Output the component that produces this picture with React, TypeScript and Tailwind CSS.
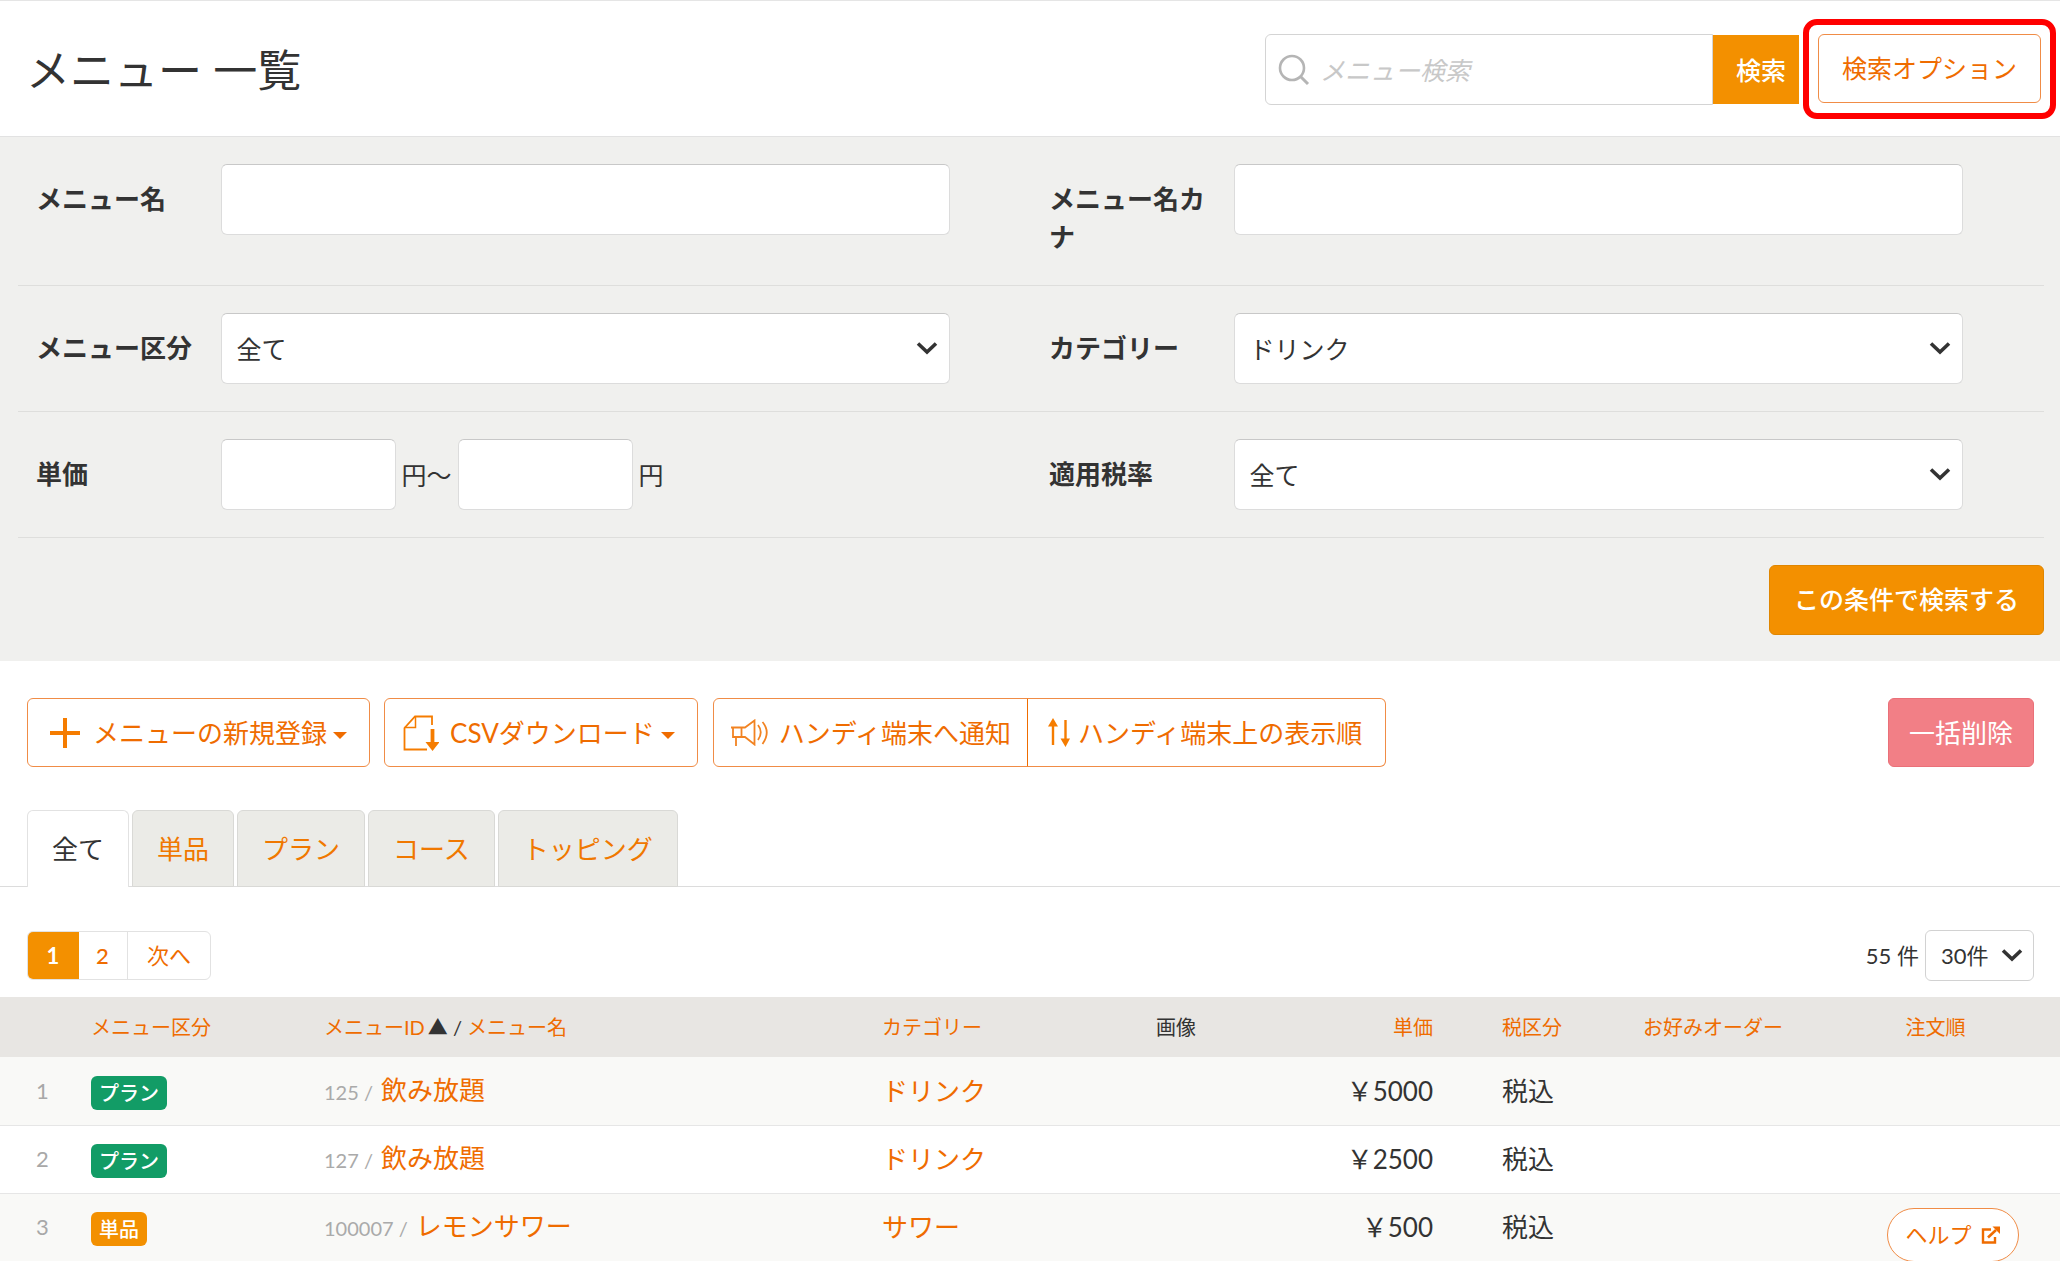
import React, { useState } from "react";

const FIELD =
  "h-[71px] rounded-md border border-[#dcdcdc] border-t-[#c8c8c8] bg-white px-[15px] text-[25px] text-[#333]";

const OUTLINE =
  "flex h-[69px] items-center border border-[#f08c46] bg-white whitespace-nowrap text-[#ef6c00]";

function Chevron({ className = "" }: { className?: string }) {
  return (
    <svg viewBox="0 0 22 14" className={`pointer-events-none h-[14px] w-[22px] ${className}`} aria-hidden="true">
      <path d="M2 2.5 L11 11 L20 2.5" fill="none" stroke="#333" strokeWidth="3.6" />
    </svg>
  );
}

function Caret() {
  return (
    <svg viewBox="0 0 14 7" className="mt-[6px] ml-[6px] h-[7px] w-[14px]" aria-hidden="true">
      <path d="M0 0H14L7 7Z" fill="#ef6c00" />
    </svg>
  );
}

function PlusIcon() {
  return (
    <svg viewBox="0 0 30 30" className="mr-[13px] h-[30px] w-[30px]" aria-hidden="true">
      <path d="M15 0V30M0 15H30" stroke="#f57c00" strokeWidth="4" />
    </svg>
  );
}

function FileDownIcon() {
  return (
    <svg viewBox="0 0 36 36" className="mr-[11px] h-[36px] w-[36px]" aria-hidden="true" fill="none" stroke="#f57c00" strokeWidth="1.8">
      <path d="M29 10V1.500H12L1.500 13V34.500H24" />
      <path d="M12.500 2V12.500H1.500" strokeWidth="1.500" />
      <path d="M29.500 14V28" strokeWidth="3.800" />
      <path d="M22.500 27H36.500L29.500 36Z" fill="#f57c00" stroke="none" />
    </svg>
  );
}

function SpeakerIcon() {
  return (
    <svg viewBox="0 0 37 27" className="mr-[11px] h-[27px] w-[37px]" aria-hidden="true" fill="none" stroke="#f28322" strokeWidth="1.800">
      <path d="M0 8.500H14L23.500 1.500V25.500L14 18H2V8.500" />
      <path d="M5 27V18M10.500 8.500V18" />
      <path d="M27 6Q32.500 13 27 21M31.500 3Q40 13 31.500 25" />
    </svg>
  );
}

function SortIcon() {
  return (
    <svg viewBox="0 0 22 29" className="mr-[8px] h-[29px] w-[22px]" aria-hidden="true">
      <path d="M5 7V27M17.500 2V22" stroke="#f57c00" strokeWidth="2.400" />
      <path d="M0 8.500L5 0L10 8.500ZM12.500 20.500H22L17.500 29Z" fill="#f57c00" />
    </svg>
  );
}

function ExternalIcon() {
  return (
    <svg viewBox="0 0 20 18" className="ml-[9px] h-[18px] w-[20px]" aria-hidden="true">
      <path d="M10 3.500H2V16.500H14V11" fill="none" stroke="#ef6c00" strokeWidth="2.400" />
      <path d="M7 11.500L15 4" fill="none" stroke="#ef6c00" strokeWidth="2.600" />
      <path d="M11.500 0.500H19V8Z" fill="#ef6c00" />
    </svg>
  );
}

function SelectField({ id, options }: { id: string; options: string[] }) {
  return (
    <div className="relative">
      <select id={id} className={`${FIELD} w-full appearance-none`}>
        {options.map((o) => (
          <option key={o}>{o}</option>
        ))}
      </select>
      <Chevron className="absolute top-[28px] right-[12px]" />
    </div>
  );
}

function Field({ id, label, children }: { id: string; label: string; children: React.ReactNode }) {
  return (
    <div className="flex w-1/2">
      <label htmlFor={id} className="w-1/5 pt-[16px] pr-[18px] pl-[18px] leading-[38px] font-bold">
        {label}
      </label>
      <div className="w-[72%]">{children}</div>
    </div>
  );
}

const ROWS = [
  { type: "プラン", id: "125", name: "飲み放題", category: "ドリンク", price: "￥5000" },
  { type: "プラン", id: "127", name: "飲み放題", category: "ドリンク", price: "￥2500" },
  { type: "単品", id: "100007", name: "レモンサワー", category: "サワー", price: "￥500" },
];

const TABS = ["全て", "単品", "プラン", "コース", "トッピング"];

export default function App() {
  const [tab, setTab] = useState("全て");
  return (
    <div className="relative min-h-screen overflow-hidden border-t border-[#e5e5e5] bg-white font-[Lato,'Noto_Sans_CJK_JP',sans-serif] text-[26px] leading-[38px] text-[#333]">
      <header className="flex items-start justify-between border-b border-[#e2e2e2] pt-[18px] pr-[4px] pb-[17px] pl-[26px]">
        <h1 className="pt-[20px] text-[44px] leading-[62px]">メニュー 一覧</h1>
        <div className="flex">
          <form className="flex pt-[15px]" onSubmit={(e) => e.preventDefault()}>
            <div className="relative">
              <svg viewBox="0 0 32 32" className="absolute top-[20px] left-[13px] h-[32px] w-[32px]" fill="none" stroke="#b5b5b5" strokeWidth="2.600" aria-hidden="true">
                <circle cx="14" cy="14" r="12" />
                <path d="M22.500 22.500L30 30" strokeWidth="3" />
              </svg>
              <input
                aria-label="メニュー検索"
                placeholder="メニュー検索"
                className="h-[71px] w-[448px] rounded-l-md border border-[#d4d4d4] bg-white pr-[12px] pl-[54px] text-[25px] placeholder:text-[#c8c8c8] placeholder:italic"
              />
            </div>
            <button className="mt-px h-[69px] w-[86px] bg-[#f39000] pl-[10px] text-[25px] font-medium text-white">検索</button>
          </form>
          <div className="ml-[4px] rounded-[14px] border-[6px] border-[#ff0000] px-[9px] pt-[9px] pb-[10px]">
            <button className={`${OUTLINE} rounded-md px-[23px] pb-[2px] text-[25px]`}>検索オプション</button>
          </div>
        </div>
      </header>

      <section className="bg-[#f0f0ee] pr-[16px] pb-[26px] pl-[18px]">
        <div className="flex border-b border-[#dededc] pt-[27px] pb-[29px]">
          <Field id="name" label="メニュー名">
            <input id="name" className={`${FIELD} w-full`} />
          </Field>
          <Field id="kana" label="メニュー名カナ">
            <input id="kana" className={`${FIELD} w-full`} />
          </Field>
        </div>
        <div className="flex border-b border-[#dededc] py-[27px]">
          <Field id="kind" label="メニュー区分">
            <SelectField id="kind" options={["全て", "単品", "プラン", "コース", "トッピング"]} />
          </Field>
          <Field id="category" label="カテゴリー">
            <SelectField id="category" options={["ドリンク", "サワー"]} />
          </Field>
        </div>
        <div className="flex border-b border-[#dededc] py-[27px]">
          <Field id="min" label="単価">
            <div className="flex items-center text-[25px]">
              <input id="min" className={`${FIELD} w-[175px]`} />
              <span className="mx-[6px]">円〜</span>
              <input aria-label="単価の上限" className={`${FIELD} w-[175px]`} />
              <span className="ml-[6px]">円</span>
            </div>
          </Field>
          <Field id="tax" label="適用税率">
            <SelectField id="tax" options={["全て", "8%", "10%"]} />
          </Field>
        </div>
        <div className="flex justify-end pt-[27px]">
          <button className="h-[70px] rounded-md border border-[#e08600] bg-[#f39000] px-[24px] pb-[2px] text-[25px] font-medium text-white">
            この条件で検索する
          </button>
        </div>
      </section>

      <div className="flex items-center pt-[37px] pr-[26px] pl-[27px]">
        <button className={`${OUTLINE} rounded-md px-[22px]`}>
          <PlusIcon />
          メニューの新規登録
          <Caret />
        </button>
        <button className={`${OUTLINE} ml-[14px] rounded-md pr-[22px] pl-[18px]`}>
          <FileDownIcon />
          CSVダウンロード
          <Caret />
        </button>
        <div className="ml-[15px] flex">
          <button className={`${OUTLINE} rounded-l-md pr-[16px] pl-[17px]`}>
            <SpeakerIcon />
            ハンディ端末へ通知
          </button>
          <button className={`${OUTLINE} -ml-px rounded-r-md border-l-[#ef6c00] pr-[23px] pl-[20px]`}>
            <SortIcon />
            ハンディ端末上の表示順
          </button>
        </div>
        <button className="ml-auto h-[69px] rounded-md border border-[#ea7078] bg-[#f27f86] px-[20px] text-white">
          一括削除
        </button>
      </div>

      <div role="tablist" className="mt-[43px] flex gap-[3px] border-b border-[#dcdcdc] pl-[27px]">
        {TABS.map((t) => (
          <button
            key={t}
            role="tab"
            aria-selected={t === tab}
            onClick={() => setTab(t)}
            className={
              t === tab
                ? "-mb-px h-[77px] rounded-t-md border border-b-0 border-[#e2e2e2] bg-white px-[24px]"
                : "-mb-px h-[77px] rounded-t-md border border-[#d9d9d6] bg-[#ebebe7] px-[24px] text-[#f07800]"
            }
          >
            {t}
          </button>
        ))}
      </div>

      <div className="flex items-center justify-between pt-[43px] pr-[26px] pb-[16px] pl-[27px] text-[22px]">
        <nav className="flex h-[49px] overflow-hidden rounded-md border border-[#e2e2e2] text-[#ef6c00]" aria-label="ページ">
          <a href="#1" className="-m-px flex w-[52px] items-center justify-center bg-[#f39000] font-bold text-white">1</a>
          <a href="#2" className="flex w-[50px] items-center justify-center border-r border-[#e2e2e2] font-medium">2</a>
          <a href="#next" className="flex w-[82px] items-center justify-center">次へ</a>
        </nav>
        <div className="flex items-center">
          <label htmlFor="per">55 件</label>
          <div className="relative ml-[6px]">
            <select id="per" className="h-[51px] w-[109px] appearance-none rounded-md border border-[#d2d2d2] bg-white pl-[15px]">
              <option>30件</option>
              <option>50件</option>
            </select>
            <Chevron className="absolute top-[18px] right-[11px]" />
          </div>
        </div>
      </div>

      <table className="w-full table-fixed border-collapse text-left">
        <colgroup>
          <col className="w-[91px]" />
          <col className="w-[233px]" />
          <col className="w-[558px]" />
          <col className="w-[210px]" />
          <col className="w-[168px]" />
          <col className="w-[173px]" />
          <col className="w-[160px]" />
          <col className="w-[240px]" />
          <col />
        </colgroup>
        <thead>
          <tr className="h-[60px] bg-[#e8e6e3] text-[20px] text-[#ef6c00] [&>th]:p-0 [&>th]:font-normal">
            <th />
            <th><a href="#kind">メニュー区分</a></th>
            <th>
              <a href="#id">メニューID</a>
              <span className="ml-[3px] text-[#333]">▲ / </span>
              <a href="#name">メニュー名</a>
            </th>
            <th><a href="#category">カテゴリー</a></th>
            <th className="text-center text-[#333]">画像</th>
            <th className="text-right"><a href="#price">単価</a></th>
            <th><div className="pl-[69px]"><a href="#tax">税区分</a></div></th>
            <th className="text-center"><a href="#custom">お好みオーダー</a></th>
            <th><div className="pr-[22px] text-center"><a href="#order">注文順</a></div></th>
          </tr>
        </thead>
        <tbody>
          {ROWS.map((r, i) => (
            <tr key={r.id} className="h-[68px] border-b border-[#e6e6e6] odd:bg-[#f9f9f7] [&>td]:p-0">
              <td><div className="pl-[36px] text-[22px] text-[#a8a8a8]">{i + 1}</div></td>
              <td>
                <span
                  className={
                    r.type === "単品"
                      ? "inline-block rounded-md bg-[#f39000] px-[8px] text-[20px] leading-[34px] font-medium text-white"
                      : "inline-block rounded-md bg-[#129c66] px-[8px] text-[20px] leading-[34px] font-medium text-white"
                  }
                >
                  {r.type}
                </span>
              </td>
              <td>
                <span className="mr-[8px] text-[20px] text-[#aaa]">{r.id} /</span>
                <a href="#item" className="text-[#ef6c00]">{r.name}</a>
              </td>
              <td><a href="#category" className="text-[#ef6c00]">{r.category}</a></td>
              <td />
              <td className="text-right">{r.price}</td>
              <td><div className="pl-[69px]">税込</div></td>
              <td />
              <td />
            </tr>
          ))}
        </tbody>
      </table>

      <a
        href="#help"
        className="absolute right-[41px] bottom-0 flex h-[54px] w-[132px] items-center justify-center rounded-full border border-[#f08c46] bg-white text-[22px] text-[#ef6c00]"
      >
        ヘルプ
        <ExternalIcon />
      </a>
    </div>
  );
}
